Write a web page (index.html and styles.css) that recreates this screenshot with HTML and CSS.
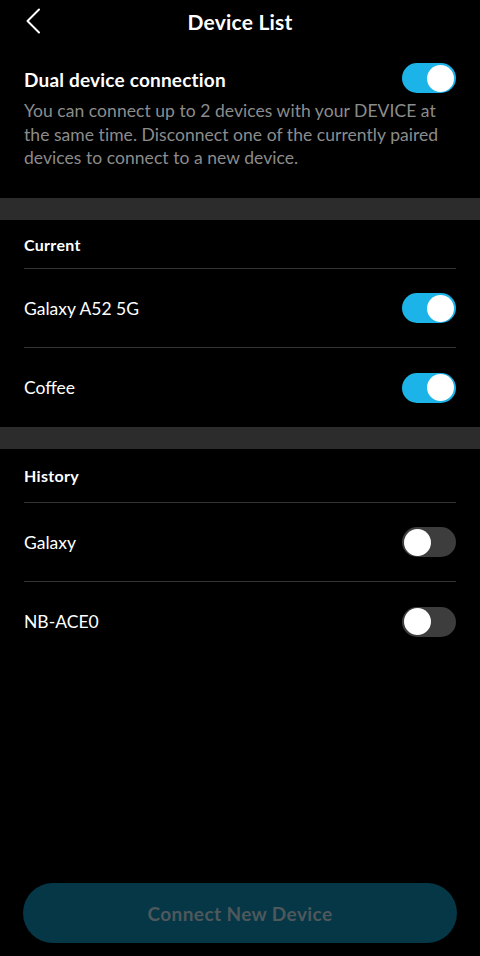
FILE: index.html
```html
<!DOCTYPE html>
<html lang="en">
<head>
  <meta charset="UTF-8">
  <meta name="viewport" content="width=device-width, initial-scale=1.0">
  <title>Device List</title>
  <link rel="stylesheet" href="styles.css">
</head>
<body>
  <div class="screen">
    <header class="top-bar">
      <button class="back-button" aria-label="Back">
        <svg width="16" height="26" viewBox="0 0 16 26">
          <path d="M14 1.5 L2.5 13 L14 24.5" fill="none" stroke="#fff" stroke-width="2" stroke-linecap="round" stroke-linejoin="round"/>
        </svg>
      </button>
      <h1 class="title">Device List</h1>
    </header>

    <section class="dual">
      <div class="dual-head">
        <span class="dual-title">Dual device connection</span>
        <span class="switch on"><span class="knob"></span></span>
      </div>
      <p class="dual-text">You can connect up to 2 devices with your DEVICE at the same time. Disconnect one of the currently paired devices to connect to a new device.</p>
    </section>

    <div class="gap-bar"></div>

    <section class="group">
      <div class="group-label current-label">Current</div>
      <div class="row">
        <span class="row-name">Galaxy A52 5G</span>
        <span class="switch on"><span class="knob"></span></span>
      </div>
      <div class="row">
        <span class="row-name">Coffee</span>
        <span class="switch on"><span class="knob"></span></span>
      </div>
    </section>

    <div class="gap-bar"></div>

    <section class="group">
      <div class="group-label history-label">History</div>
      <div class="row">
        <span class="row-name">Galaxy</span>
        <span class="switch"><span class="knob"></span></span>
      </div>
      <div class="row">
        <span class="row-name">NB-ACE0</span>
        <span class="switch"><span class="knob"></span></span>
      </div>
    </section>

    <div class="spacer"></div>

    <button class="connect-button">Connect New Device</button>
  </div>
</body>
</html>
```

FILE: styles.css
```css
* {
  box-sizing: border-box;
}

body {
  margin: 0;
  padding: 0;
  background: #000;
  color: #fff;
  font-family: Lato, "Noto Sans", sans-serif;
}

.screen {
  display: flex;
  flex-direction: column;
  height: 956px;
  width: 480px;
  overflow: hidden;
}

.top-bar {
  height: 42px;
  display: flex;
  align-items: center;
  justify-content: center;
  position: relative;
}

.back-button {
  position: absolute;
  left: 25px;
  top: 8px;
  padding: 0;
  background: none;
  border: none;
  display: flex;
}

.title {
  margin: 0;
  font-size: 21px;
  font-weight: 700;
  letter-spacing: 0.2px;
}

.dual {
  padding: 21px 24px 0 24px;
  height: 156px;
}

.dual-head {
  display: flex;
  justify-content: space-between;
  align-items: center;
  height: 30px;
}

.dual-title {
  font-size: 19px;
  font-weight: 700;
  letter-spacing: 0.2px;
  padding-top: 2px;
}

.dual-text {
  margin: 6px 0 0 0;
  font-size: 17.5px;
  line-height: 23.7px;
  letter-spacing: 0.05px;
  color: #8c8c8c;
}

.gap-bar {
  height: 22px;
  background: #2c2c2c;
}

.group {
  padding: 0 24px;
}

.group-label {
  display: flex;
  align-items: center;
  font-size: 16px;
  font-weight: 700;
  letter-spacing: 0.3px;
  border-bottom: 1px solid #333;
}

.current-label {
  height: 49px;
}

.history-label {
  height: 54px;
}

.row {
  height: 79px;
  display: flex;
  justify-content: space-between;
  align-items: center;
  border-bottom: 1px solid #333;
}

.row:last-child {
  border-bottom: none;
}

.row-name {
  font-size: 17.5px;
}

.switch {
  width: 54px;
  height: 30px;
  border-radius: 15px;
  background: #3d3d3d;
  display: flex;
  align-items: center;
  padding: 0 2px;
}

.switch.on {
  background: #1cb3e8;
  justify-content: flex-end;
}

.knob {
  width: 27px;
  height: 27px;
  border-radius: 50%;
  background: #fff;
}

.spacer {
  flex: 1;
}

.connect-button {
  margin: 0 23px 13px 23px;
  height: 60px;
  border: none;
  border-radius: 30px;
  background: #053747;
  color: #4f585b;
  font-family: Lato, "Noto Sans", sans-serif;
  font-size: 19px;
  font-weight: 700;
  letter-spacing: 0.4px;
}
```
